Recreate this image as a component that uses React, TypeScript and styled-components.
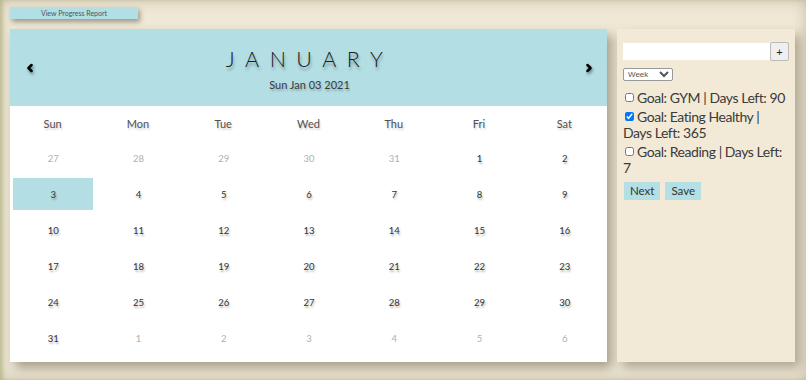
import React from "react";
import styled, { createGlobalStyle } from "styled-components";
import { ChevronLeft, ChevronRight } from "lucide-react";

const Global = createGlobalStyle`
  html, body { margin: 0; padding: 0; }
  body {
    background: #efe8d5;
    font-family: "Lato", "Open Sans", sans-serif;
    min-height: 100vh;
    box-shadow: inset 3px 0 3px rgba(150, 160, 90, 0.35), inset 0 0 14px rgba(120, 110, 80, 0.35);
  }
  #root { min-height: 100vh; }
`;

const Page = styled.div`
  padding: 7px 11px 0 10px;
  display: flex;
  flex-direction: column;
  gap: 10px;
`;

const ReportButton = styled.button`
  width: 128px;
  height: 12px;
  padding: 0;
  border: none;
  background: #b2dfe5;
  color: #4a5560;
  font-family: "Lato", sans-serif;
  font-size: 7px;
  line-height: 12px;
  box-shadow: 2px 3px 5px rgba(0, 0, 0, 0.35);
  cursor: pointer;
`;

const Main = styled.div`
  display: flex;
  gap: 10px;
  height: 333px;
`;

const Calendar = styled.div`
  width: 597px;
  background: #fff;
  display: flex;
  flex-direction: column;
  box-shadow: 5px 6px 10px rgba(60, 50, 30, 0.4);
`;

const Header = styled.div`
  height: 77px;
  background: #b3dfe4;
  display: flex;
  align-items: center;
  justify-content: space-between;
  padding: 0 12px 0 14px;
`;

const Arrow = styled.div`
  display: flex;
  color: #000;
  filter: drop-shadow(1px 2px 1.5px rgba(0, 0, 0, 0.45));
`;

const TitleBox = styled.div`
  display: flex;
  flex-direction: column;
  align-items: center;
  padding-top: 2px;
`;

const Month = styled.div`
  font-size: 21.5px;
  letter-spacing: 10.5px;
  color: #1c1c1c;
  font-weight: 300;
  text-shadow: 1px 3px 3px rgba(0, 0, 0, 0.35);
  line-height: 26px;
`;

const DateLine = styled.div`
  font-size: 11px;
  color: #3a3a3a;
  margin-top: 6px;
  text-shadow: 1px 2px 2px rgba(0, 0, 0, 0.25);
`;

const WeekRow = styled.div`
  display: grid;
  grid-template-columns: repeat(7, 1fr);
  height: 34px;
  align-items: center;
`;

const WeekDay = styled.div`
  text-align: center;
  font-size: 11px;
  color: #505050;
  text-shadow: 1px 2px 2px rgba(0, 0, 0, 0.2);
`;

const Grid = styled.div`
  display: grid;
  grid-template-columns: repeat(7, 1fr);
  grid-template-rows: repeat(6, 36px);
`;

const Cell = styled.div<{ $muted?: boolean; $active?: boolean }>`
  margin: 2px 2px 2px 3px;
  display: flex;
  align-items: center;
  justify-content: center;
  font-size: 9.5px;
  background: ${(p) => (p.$active ? "#b3dfe4" : "transparent")};
  color: ${(p) => (p.$muted ? "#b0b0b0" : "#333")};
  text-shadow: ${(p) => (p.$muted ? "none" : "1px 2px 2px rgba(0,0,0,0.3)")};
`;

const Panel = styled.div`
  width: 178px;
  background: #f2ead7;
  box-shadow: 5px 6px 10px rgba(60, 50, 30, 0.35);
  padding: 13px 6px 0 6px;
  box-sizing: border-box;
  display: flex;
  flex-direction: column;
`;

const InputRow = styled.div`
  display: flex;
  align-items: center;
`;

const TextInput = styled.input`
  width: 147px;
  height: 17px;
  box-sizing: border-box;
  border: none;
  background: #fff;
  padding: 0 2px;
`;

const PlusButton = styled.button`
  width: 20px;
  height: 19px;
  padding: 0;
  box-sizing: border-box;
  border: 1px solid #bbb;
  border-radius: 2px;
  background: #efefef;
  font-size: 11px;
  color: #222;
`;

const Select = styled.select`
  width: 50px;
  height: 13px;
  margin-top: 1px;
  font-size: 8px;
  padding: 0;
  border: 1px solid #999;
  border-radius: 2px;
  background: #fff;
  color: #555;
`;

const Goals = styled.div`
  margin-top: 9px;
  display: flex;
  flex-direction: column;
  gap: 2px;
`;

const Goal = styled.label`
  font-size: 14px;
  letter-spacing: -0.45px;
  line-height: 16.5px;
  color: #3a3a3a;
  input {
    width: 9px;
    height: 9px;
    margin: 0 3px 0 2px;
    vertical-align: 1px;
  }
`;

const Actions = styled.div`
  display: flex;
  gap: 5px;
  margin-top: 5px;
  padding-left: 1px;
`;

const ActionButton = styled.button`
  height: 18px;
  padding: 0 6px;
  border: none;
  background: #b3dfe5;
  color: #333;
  font-family: "Lato", sans-serif;
  font-size: 11.5px;
`;

const weekdays = ["Sun", "Mon", "Tue", "Wed", "Thu", "Fri", "Sat"];

type Day = { n: number; muted?: boolean; active?: boolean };

const days: Day[] = [
  { n: 27, muted: true },
  { n: 28, muted: true },
  { n: 29, muted: true },
  { n: 30, muted: true },
  { n: 31, muted: true },
  { n: 1 },
  { n: 2 },
];
for (let i = 3; i <= 31; i++) days.push({ n: i, active: i === 3 });
for (let i = 1; i <= 6; i++) days.push({ n: i, muted: true });

const goals = [
  { text: "Goal: GYM | Days Left: 90", checked: false },
  { text: "Goal: Eating Healthy | Days Left: 365", checked: true },
  { text: "Goal: Reading | Days Left: 7", checked: false },
];

export default function App() {
  return (
    <>
      <Global />
      <Page>
        <ReportButton>View Progress Report</ReportButton>
        <Main>
          <Calendar>
            <Header>
              <Arrow>
                <ChevronLeft size={12} strokeWidth={5} />
              </Arrow>
              <TitleBox>
                <Month>JANUARY</Month>
                <DateLine>Sun Jan 03 2021</DateLine>
              </TitleBox>
              <Arrow>
                <ChevronRight size={12} strokeWidth={5} />
              </Arrow>
            </Header>
            <WeekRow>
              {weekdays.map((d) => (
                <WeekDay key={d}>{d}</WeekDay>
              ))}
            </WeekRow>
            <Grid>
              {days.map((d, i) => (
                <Cell key={i} $muted={d.muted} $active={d.active}>
                  {d.n}
                </Cell>
              ))}
            </Grid>
          </Calendar>
          <Panel>
            <InputRow>
              <TextInput type="text" />
              <PlusButton>+</PlusButton>
            </InputRow>
            <div>
              <Select defaultValue="Week">
                <option>Week</option>
                <option>Month</option>
              </Select>
            </div>
            <Goals>
              {goals.map((g) => (
                <Goal key={g.text}>
                  <input type="checkbox" defaultChecked={g.checked} />
                  {g.text}
                </Goal>
              ))}
            </Goals>
            <Actions>
              <ActionButton>Next</ActionButton>
              <ActionButton>Save</ActionButton>
            </Actions>
          </Panel>
        </Main>
      </Page>
    </>
  );
}
